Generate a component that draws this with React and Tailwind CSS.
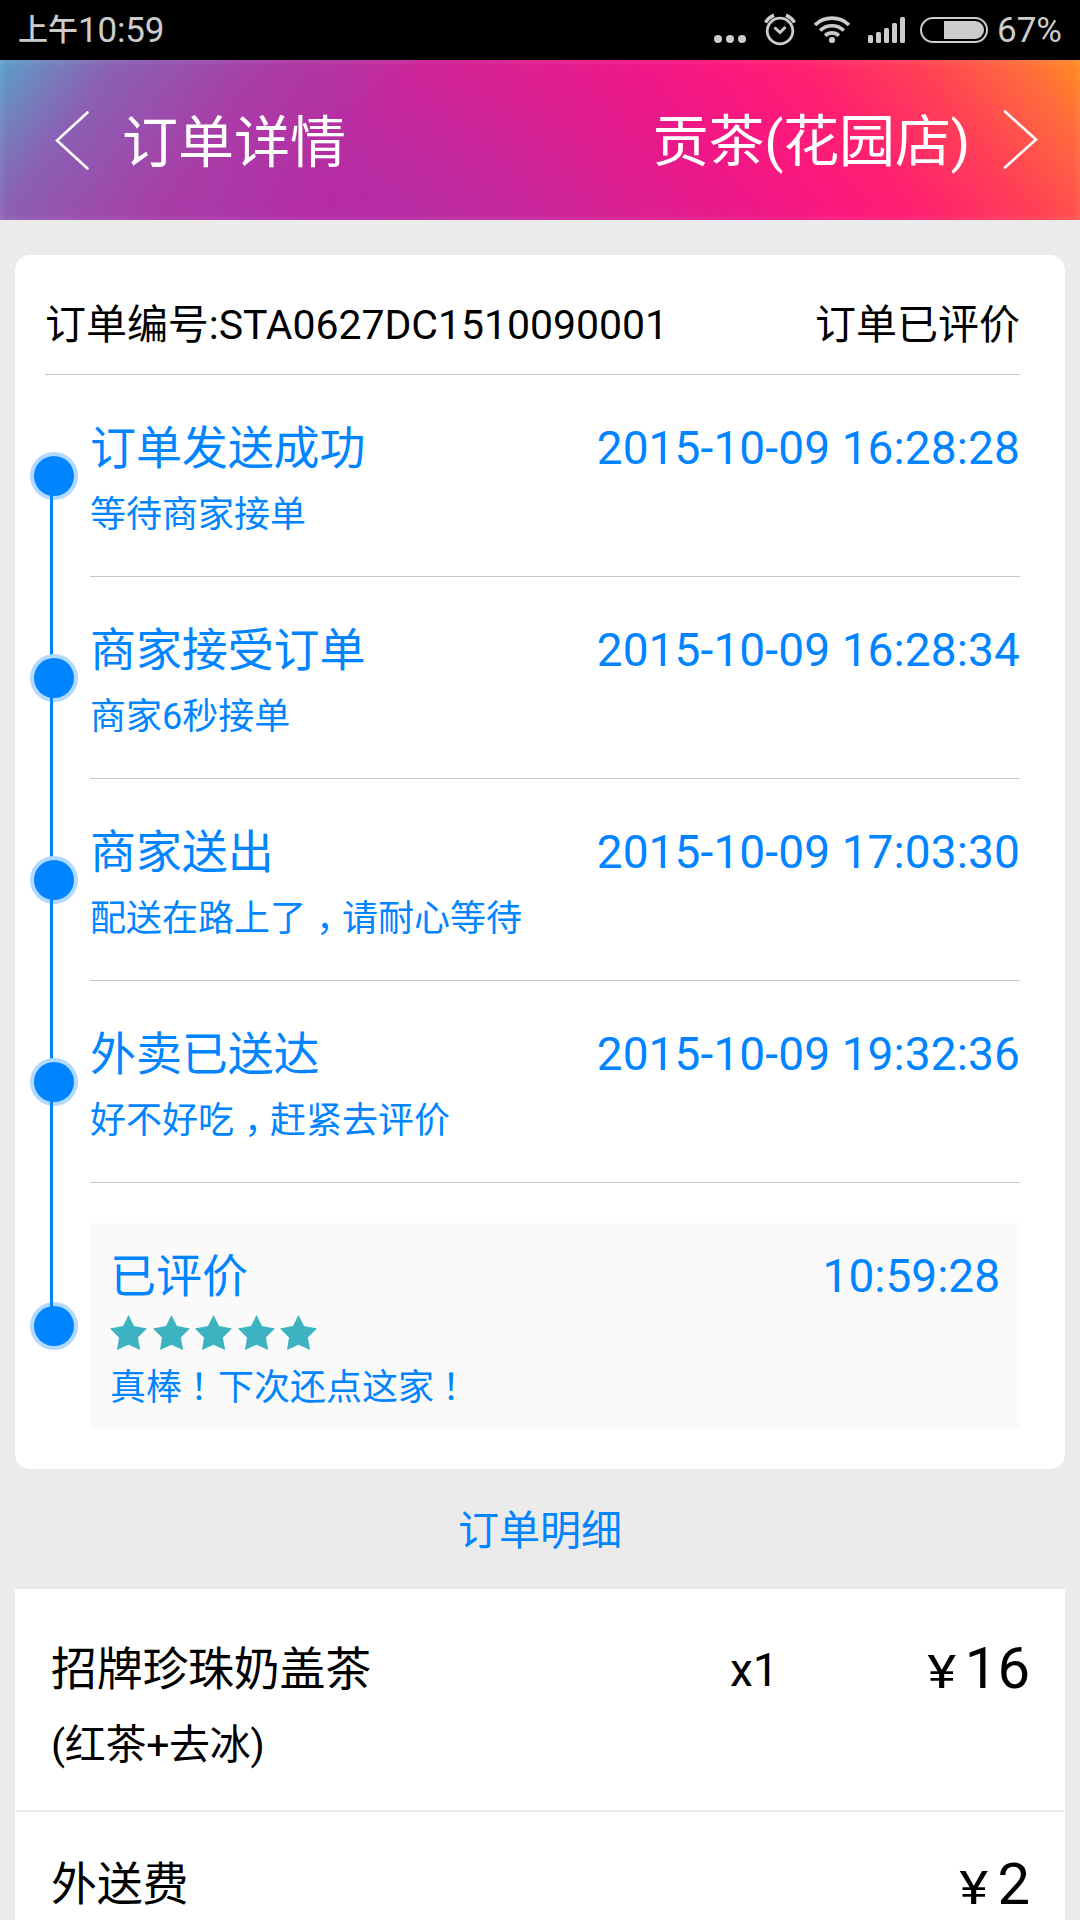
const STEPS = [
  { title: "订单发送成功", note: ["等待商家接单"], time: "2015-10-09 16:28:28" },
  { title: "商家接受订单", note: ["商家6秒接单"], time: "2015-10-09 16:28:34" },
  { title: "商家送出", note: ["配送在路上了", "请耐心等待"], time: "2015-10-09 17:03:30" },
  { title: "外卖已送达", note: ["好不好吃", "赶紧去评价"], time: "2015-10-09 19:32:36" },
];

function StatusBar() {
  return (
    <div className="flex h-[60px] items-center justify-between bg-black pl-[18px] pr-[18px] text-[#cccccc]">
      <div className="flex items-center text-[35px] leading-[60px]">
        <span className="text-[30px] font-medium">上午</span>
        <span className="pt-px tracking-[-0.2px]">10:59</span>
      </div>
      <div className="flex items-center">
        <svg width="32" height="60" viewBox="714 0 32 60" fill="currentColor">
          <circle cx="718" cy="39" r="4" />
          <circle cx="730" cy="39" r="4" />
          <circle cx="742" cy="39" r="4" />
        </svg>
        <svg className="ml-[18px]" width="32" height="60" viewBox="764 0 32 60" fill="none" stroke="currentColor" strokeWidth="2.800">
          <circle cx="780" cy="31" r="12.800" />
          <path d="M774.500 27.500l5.500 5 5.500-5.500" strokeWidth="3" />
          <path d="M765.500 22.500a20 20 0 0 1 8.500-7.300M794.500 22.500a20 20 0 0 0-8.500-7.300" strokeWidth="3.600" />
        </svg>
        <svg className="ml-[17px]" width="38" height="60" viewBox="813 0 38 60" fill="none" stroke="currentColor" strokeWidth="3.700">
          <path d="M815 25a24.500 24.500 0 0 1 34 0" />
          <path d="M820.200 30.500a17 17 0 0 1 23.600 0" />
          <path d="M825.200 35.600a10 10 0 0 1 13.600 0" />
          <circle cx="832" cy="40" r="3.100" fill="currentColor" stroke="none" />
        </svg>
        <svg className="ml-[17px]" width="37" height="60" viewBox="868 0 37 60" fill="currentColor">
          <rect x="868" y="35" width="5" height="8" rx="1.500" />
          <rect x="876" y="32" width="5" height="11" rx="1.500" />
          <rect x="884" y="28" width="5" height="15" rx="1.500" />
          <rect x="892" y="23" width="5" height="20" rx="1.500" />
          <rect x="900" y="17" width="5" height="26" rx="1.500" />
        </svg>
        <svg className="ml-[15px]" width="68" height="60" viewBox="920 0 68 60">
          <rect x="921" y="18" width="66" height="24" rx="12" fill="none" stroke="currentColor" strokeWidth="2" />
          <path d="M944 21h31a9 9 0 0 1 0 18h-31z" fill="currentColor" />
        </svg>
        <span className="ml-[9px] pt-[2px] text-[35px] leading-[58px]">67%</span>
      </div>
    </div>
  );
}

function Header() {
  return (
    <header className="flex h-[160px] items-center justify-between bg-[linear-gradient(127deg,#5aa0cc_0px,#7480bc_45px,#8a60b4_93px,#9850ae_150px,rgba(168,62,168,0.85)_220px,rgba(180,44,164,0)_340px),radial-gradient(ellipse_270px_150px_at_370px_165px,rgba(180,44,164,0.45),rgba(180,44,164,0)),linear-gradient(51deg,#a838a6_120px,#b42ca4_233px,#bb2aa0_325px,#c4289c_368px,#d02296_440px,#de1e8f_510px,#ee1788_590px,#fa187f_650px,#ff2070_720px,#ff4056_810px,#ff6c3c_892px,#ff8c20_940px)] pl-[54px] pr-[42px] text-white shadow-[inset_0_0_8px_rgba(255,255,255,0.15)]">
      <div className="flex items-center">
        <svg width="36" height="62" viewBox="54 109 36 62" fill="none" stroke="currentColor" strokeWidth="2.600" strokeLinecap="round">
          <path d="M87.500 112.500L57 140.500l30.500 28" />
        </svg>
        <h1 className="ml-[32px] pt-[5px] text-[56px] leading-[80px]">订单详情</h1>
      </div>
      <div className="flex items-center">
        <div className="pt-[3px] text-[56px] leading-[80px] tracking-[-0.2px]">贡茶(花园店)</div>
        <svg className="ml-[32px]" width="36" height="62" viewBox="1002 109 36 62" fill="none" stroke="currentColor" strokeWidth="2.600" strokeLinecap="round">
          <path d="M1005 111.500l31 28-31 28" />
        </svg>
      </div>
    </header>
  );
}

/* Timeline node: a blue dot with a pale halo, plus the rail running down to the next node. */
function Node({ rail }) {
  return (
    <div className="relative h-[48px] w-[48px] shrink-0 rounded-full bg-[#b2d9ff] p-[4px]">
      {rail && <div className={`absolute left-[20px] top-[24px] w-[2.7px] bg-[#0084ff] ${rail}`} />}
      <div className="relative h-[40px] w-[40px] rounded-full bg-[#0084ff]" />
    </div>
  );
}

/* Full-width punctuation set half-width and padded so that it sits mid-cell. */
function Comma() {
  return <span className="pl-[10px] pr-[8px] [font-feature-settings:'halt']">，</span>;
}

function Bang() {
  return <span className="pl-[8px] pr-[10px] [font-feature-settings:'halt']">！</span>;
}

function Step({ step, rail }) {
  return (
    <div className="flex h-[202px] pl-[15px]">
      <div className="relative z-10 pt-[77px]">
        <Node rail={rail} />
      </div>
      <div className="ml-[12px] mr-[45px] flex-1 border-b border-[#c8c8c8] pt-[43px]">
        <div className="flex justify-between text-[46px] leading-[60px]">
          <span className="tracking-[-0.1px]">{step.title}</span>
          <span className="tracking-[0.12px]">{step.time}</span>
        </div>
        <div className="mt-[13px] flex text-[36px] leading-[48px]">
          <span>{step.note[0]}</span>
          {step.note[1] && <Comma />}
          <span>{step.note[1]}</span>
        </div>
      </div>
    </div>
  );
}

function Star() {
  return (
    <svg width="37" height="35" viewBox="0 0 37 35" fill="#3db2c0">
      <path d="M18.500 0L24 11l13 2.500-9.200 9L30.200 35l-11.700-5.300L7 35l2-12.500L0 13.500 13 11z" />
    </svg>
  );
}

function Review() {
  return (
    <div className="flex pl-[15px] pt-[40px]">
      <div className="pt-[79px]">
        <Node />
      </div>
      <div className="ml-[12px] mr-[45px] h-[206px] flex-1 bg-[#fafafa] pl-[20px] pr-[20px] pt-[23px]">
        <div className="flex justify-between text-[46px] leading-[60px]">
          <span>已评价</span>
          <span>10:59:28</span>
        </div>
        <div className="mt-[9px] flex gap-[5.500px]">
          <Star />
          <Star />
          <Star />
          <Star />
          <Star />
        </div>
        <div className="mt-[14px] flex text-[36px] leading-[48px]">
          <span>真棒</span>
          <Bang />
          <span>下次还点这家</span>
          <Bang />
        </div>
      </div>
    </div>
  );
}

function Price({ value }) {
  return (
    <div className="flex items-baseline leading-[60px]">
      <span className="mr-[9px] inline-block origin-right scale-x-120 text-[46px]">¥</span>
      <span className="text-[58px]">{value}</span>
    </div>
  );
}

export default function App() {
  return (
    <div className="h-[1920px] w-[1080px] overflow-hidden bg-[#ebebeb] font-['Roboto','Noto_Sans_CJK_SC',sans-serif] text-black">
      <StatusBar />
      <Header />
      <main className="px-[15px] pt-[35px]">
        <section className="h-[1214px] rounded-[15px] bg-white text-[#0084ff]">
          <div className="ml-[30px] mr-[45px] flex h-[120px] justify-between border-b border-[#c8c8c8] pt-[40px] text-[41px] leading-[60px] text-black">
            <span className="tracking-[-0.05px]">订单编号:STA0627DC1510090001</span>
            <span>订单已评价</span>
          </div>
          {STEPS.map((step, i) => (
            <Step key={step.title} step={step} rail={i === 3 ? "h-[244px]" : "h-[202px]"} />
          ))}
          <Review />
        </section>
        <div className="h-[120px] pt-[32px] text-center text-[41px] leading-[60px] text-[#0084ff]">订单明细</div>
        <section>
          <div className="flex h-[221px] bg-white pl-[36px] pr-[35px] pt-[49px]">
            <div className="w-[679px] pt-px">
              <div className="text-[46px] leading-[60px] tracking-[-0.3px]">招牌珍珠奶盖茶</div>
              <div className="mt-[16px] text-[41px] leading-[60px] tracking-[-0.3px]">(红茶+去冰)</div>
            </div>
            <div className="pt-[2px] text-[46px] leading-[60px]">x1</div>
            <div className="ml-auto">
              <Price value="16" />
            </div>
          </div>
          <div className="mt-[2px] flex h-[221px] justify-between bg-white pl-[36px] pr-[35px] pt-[42px]">
            <div className="text-[46px] leading-[60px] tracking-[-0.3px]">外送费</div>
            <Price value="2" />
          </div>
        </section>
      </main>
    </div>
  );
}
